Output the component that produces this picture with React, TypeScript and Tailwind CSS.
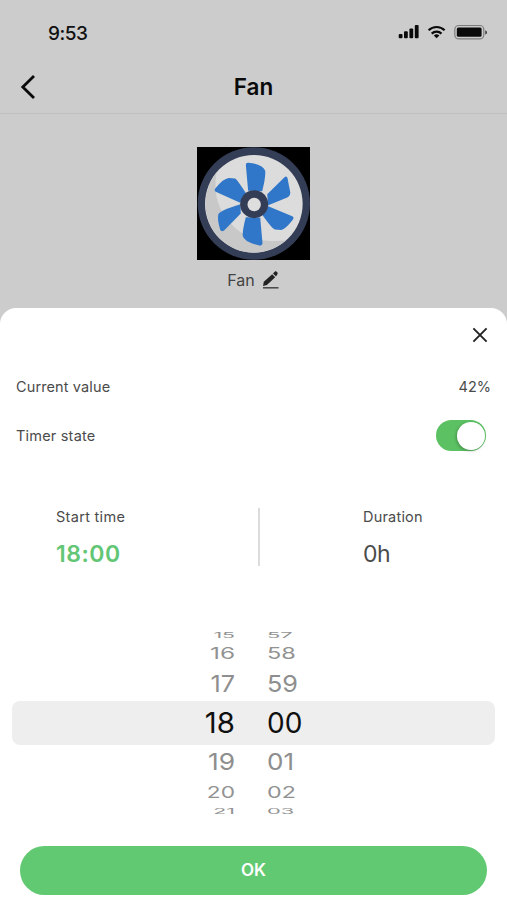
const times = [
  { h: '15', m: '57', row: 'h-2', hour: '[transform:scale(0.76,0.27)]', minute: '[transform:scale(0.78,0.27)]', tone: 'text-[#929292]' },
  { h: '16', m: '58', row: 'h-7', hour: '[transform:scale(0.87,0.59)]', minute: '[transform:scale(0.84,0.59)]', tone: 'text-[#929292]' },
  { h: '17', m: '59', row: 'h-[34px]', hour: '[transform:scale(0.9,0.83)]', minute: '[transform:scale(0.9,0.83)]', tone: 'text-[#8e8e8e]' },
  { h: '18', m: '00', row: 'h-11', hour: '[transform:scale(1.05,1)]', minute: '', tone: 'text-[#101010]' },
  { h: '19', m: '01', row: 'h-[34px]', hour: '[transform:scale(0.94,0.83)]', minute: '[transform:scale(0.93,0.83)]', tone: 'text-[#8e8e8e]' },
  { h: '20', m: '02', row: 'h-[26px]', hour: '[transform:scale(0.81,0.59)]', minute: '[transform:scale(0.83,0.59)]', tone: 'text-[#929292]' },
  { h: '21', m: '03', row: 'h-3', hour: '[transform:scale(0.76,0.27)]', minute: '[transform:scale(0.78,0.27)]', tone: 'text-[#929292]' },
];

function StatusIcons() {
  return (
    <svg className="h-5 w-[92px]" viewBox="397 22 92 20" fill="#0a0a0a">
      <rect x="398.7" y="34" width="3.8" height="4.2" rx="1" />
      <rect x="404" y="31.3" width="3.8" height="6.9" rx="1" />
      <rect x="409.4" y="28.4" width="3.8" height="9.8" rx="1" />
      <rect x="414.8" y="25" width="3.8" height="13.2" rx="1" />
      <g fill="none" stroke="#0a0a0a" strokeWidth="2.2">
        <path d="M428.6 30.2a11.6 11.6 0 0 1 16 0" />
        <path d="M431.7 33.6a7.2 7.2 0 0 1 9.8 0" />
      </g>
      <path d="M433.8 35.4a4.2 4.2 0 0 1 5.6 0l-2.8 2.9z" />
      <rect x="454.8" y="25.5" width="29" height="13.4" rx="4" fill="none" stroke="#7c7c7c" strokeWidth="1.2" />
      <rect x="456.8" y="27.6" width="24.8" height="9.2" rx="1.5" />
      <path d="M485.3 30.2c2.2.8 2.2 3.6 0 4.4z" fill="#333" />
    </svg>
  );
}

function FanPicture() {
  return (
    <svg className="size-[113px]" viewBox="10 10 338 338">
      <rect x="10" y="10" width="338" height="338" fill="#000" />
      <circle cx="180" cy="179" r="168" fill="#343d56" />
      <circle cx="180" cy="180" r="146" fill="#dcdcdc" />
      <path d="M68 87C22 145 24 232 80 286c55 52 140 52 196 4-70 6-125-8-160-46-42-44-58-90-48-157z" fill="#c8c8c9" />
      <g fill="#3077c9">
        <path d="M163 141L156 63Q156 56 164 57Q205 61 214 81Q216 100 205 142Z" />
        <path d="M220 151L271 101Q279 95 281 104L289 146Q289 156 280 161L223 184Z" />
        <path d="M223 187L295 217Q302 221 296 228Q275 255 262 258L243 257Q234 254 205 213Z" />
        <path d="M199 221L206 298Q205 306 197 305Q150 293 147 276Q145 262 156 220Z" />
        <path d="M141 209L91 260Q82 266 79 256Q70 226 74 211Q79 199 140 181Z" />
        <path d="M139 177L66 144Q60 140 66 133Q88 105 105 103L124 104Q130 107 157 149Z" />
      </g>
      <circle cx="181" cy="181" r="42" fill="#343d56" />
      <circle cx="181" cy="182" r="20" fill="#dedede" />
    </svg>
  );
}

export default function App() {
  return (
    <main className="flex h-[900px] w-full flex-col overflow-hidden bg-[#cccccc] font-['Inter',sans-serif] text-[#4b4b4b]">
      <div className="flex h-[60px] shrink-0 items-start justify-between pr-[18px] pl-12 pt-[22px]">
        <span className="text-[19px] leading-6 font-medium tracking-[-0.5px] text-[#111]">9:53</span>
        <StatusIcons />
      </div>

      <header className="grid h-[54px] shrink-0 grid-cols-[1fr_auto_1fr] items-center border-b border-[#c0c0c0] px-5">
        <button aria-label="Back" className="w-4">
          <svg className="h-6 w-4" viewBox="0 0 16 24" fill="none" stroke="#0a0a0a" strokeWidth="2.8">
            <path d="M14 1L2.8 12 14 23" />
          </svg>
        </button>
        <h1 className="text-[22.5px] leading-7 font-semibold text-[#0a0a0a]">Fan</h1>
      </header>

      <section className="flex h-[194px] shrink-0 flex-col items-center pt-[33px]">
        <FanPicture />
        <div className="mt-2 flex h-6 items-center gap-[7px]">
          <span className="text-base text-[#444]">Fan</span>
          <svg className="h-[18px] w-[18px]" viewBox="0 0 18 18">
            <path d="M1 15l.8-4.2 8.4-7.6 3 3.1-8.3 7.8z" fill="#222" />
            <path d="M11 2.4l1.7-1.6c.8-.7 1.6-.5 2.3.2.9.9 1 1.6.2 2.4L14 5.5z" fill="#222" />
            <path d="M1 16.8h15.5" stroke="#444" strokeWidth="1.5" />
          </svg>
        </div>
      </section>

      <section className="flex flex-1 flex-col rounded-t-[16px] bg-white">
        <div className="flex h-[54px] shrink-0 items-center justify-end pr-[19px]">
          <button aria-label="Close">
            <svg className="size-4" viewBox="0 0 16 16" fill="none" stroke="#222" strokeWidth="1.9">
              <path d="M1.4 1.4l13.2 13.2M14.6 1.4L1.4 14.6" />
            </svg>
          </button>
        </div>

        <div className="flex h-[50px] shrink-0 items-center justify-between px-4 text-[14.5px]">
          <span className="tracking-[0.12px]">Current value</span>
          <span>42%</span>
        </div>
        <div className="flex h-[47px] shrink-0 items-center justify-between pr-[21px] pl-4 text-[14.5px]">
          <span className="tracking-[0.2px]">Timer state</span>
          <div role="switch" aria-checked="true" className="flex h-[31px] w-[50px] items-center justify-end rounded-full bg-[#5cc162] pr-px">
            <span className="size-7 rounded-full bg-white shadow-[-1px_1px_3px_rgba(0,0,0,0.25)]" />
          </div>
        </div>

        <div className="mt-[49px] flex h-[58px] shrink-0 items-start">
          <div className="flex w-[258px] flex-col pl-14">
            <span className="text-[14.5px] leading-[18px] tracking-[0.3px]">Start time</span>
            <span className="mt-4 text-[23px] leading-6 font-semibold tracking-[0.5px] text-[#63c675]">18:00</span>
          </div>
          <div className="h-[58px] w-0.5 bg-[#dcdcdc]" />
          <div className="flex flex-col pl-[103px]">
            <span className="text-[14.5px] leading-[18px] tracking-[0.2px]">Duration</span>
            <span className="mt-4 text-[23px] leading-6 tracking-[-0.4px]">0h</span>
          </div>
        </div>

        <div className="mt-[65px] flex shrink-0 flex-col px-3">
          {times.map((t) => (
            <div key={t.h} className={`flex items-center rounded-[8px] text-[28px] leading-none ${t.row} ${t.tone} ${t.h === '18' ? 'bg-[#eeeeee]' : ''}`}>
              <span className={`flex w-[223px] origin-right justify-end ${t.hour}`}>{t.h}</span>
              <span className={`ml-8 origin-left ${t.minute}`}>{t.m}</span>
            </div>
          ))}
        </div>

        <button className="mx-5 mt-[29px] flex h-[49px] shrink-0 items-center justify-center rounded-full bg-[#61c972] text-[17px] font-semibold text-white">
          OK
        </button>
      </section>
    </main>
  );
}
